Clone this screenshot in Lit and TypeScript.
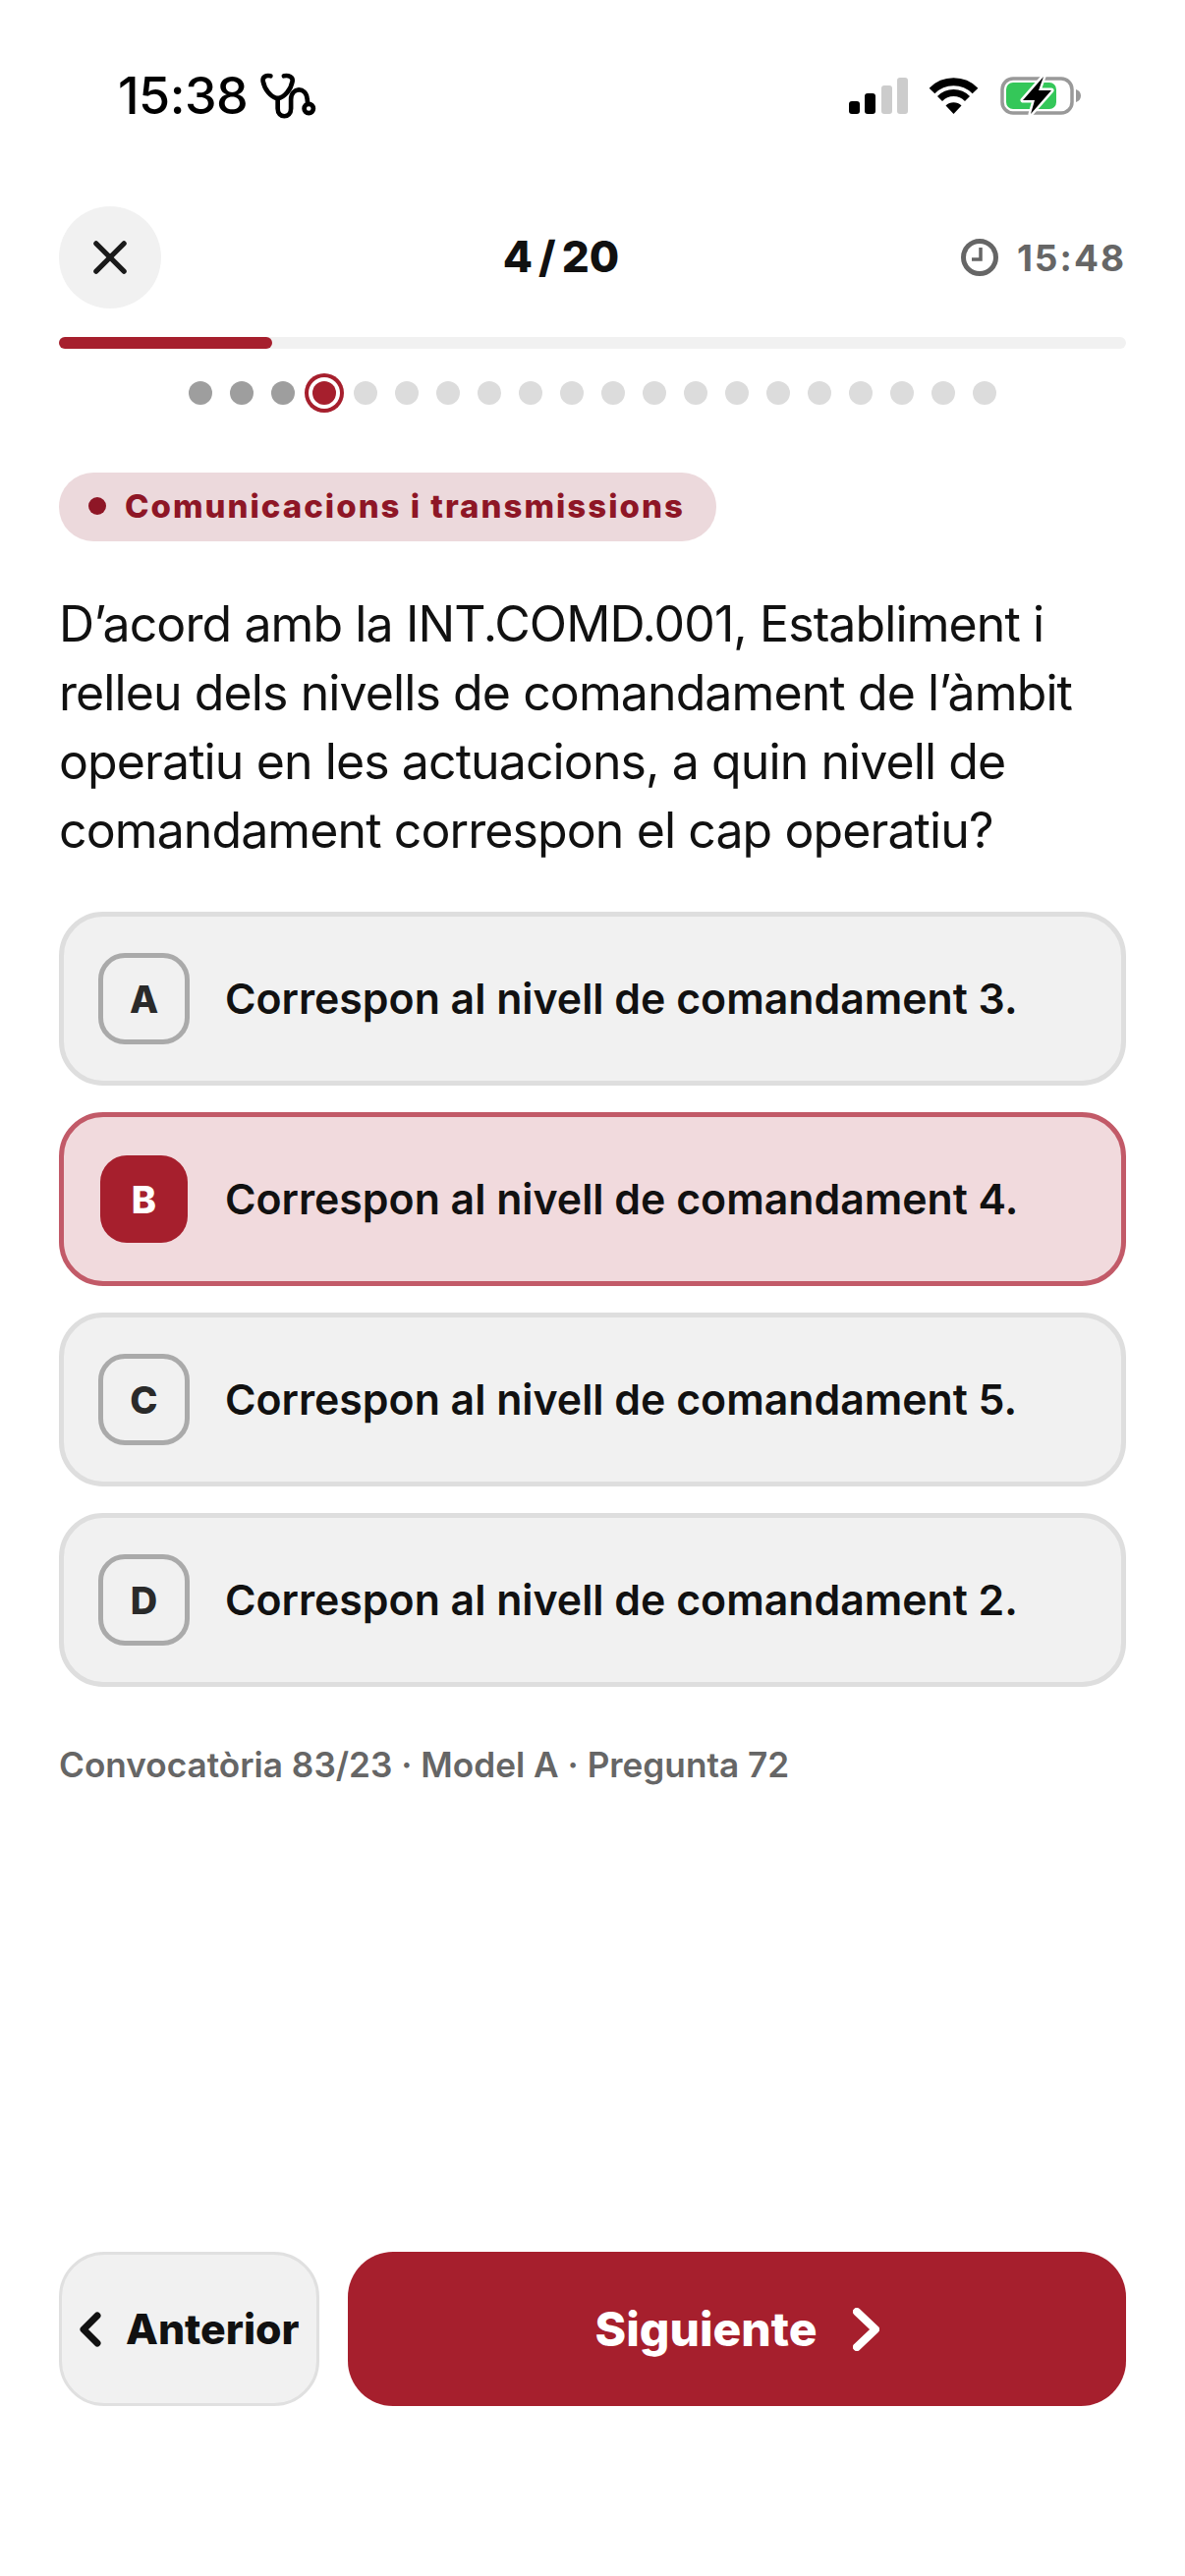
import { LitElement, css, html, svg } from "lit";
import { customElement } from "lit/decorators.js";

const OPTIONS = [
  { key: "A", text: "Correspon al nivell de comandament 3." },
  { key: "B", text: "Correspon al nivell de comandament 4.", selected: true },
  { key: "C", text: "Correspon al nivell de comandament 5." },
  { key: "D", text: "Correspon al nivell de comandament 2." },
];

const TOTAL = 20;
const CURRENT = 4;

const stethoscope = svg`<svg class="steth" viewBox="0 0 56 46" fill="none" stroke="#000" stroke-width="4.500" stroke-linecap="round" stroke-linejoin="round">
  <path d="M11 4 C6 3 3 5 3.500 9 C5 17 11 25 18 26 C25 25 31 17 32.500 9 C33 5 29 3 24 4" />
  <path d="M18 26 V36 C18 46 31 46 31 36 V27 C31 15 46 14 47 27 L47.500 31" />
  <circle cx="48.500" cy="36" r="4.500" />
</svg>`;

const signal = svg`<svg class="signal" viewBox="0 0 60 37">
  <rect x="0" y="24" width="11" height="13" rx="3" fill="#000" />
  <rect x="16" y="16" width="11" height="21" rx="3" fill="#000" />
  <rect x="33" y="8" width="11" height="29" rx="3" fill="#ccc" />
  <rect x="49" y="0" width="11" height="37" rx="3" fill="#ccc" />
</svg>`;

const wifi = svg`<svg class="wifi" viewBox="0 0 51 37" fill="none">
  <path d="M3.500 13.500 A31 31 0 0 1 47.500 13.500" stroke="#000" stroke-width="8" />
  <path d="M11.500 21.500 A19.500 19.500 0 0 1 39.500 21.500" stroke="#000" stroke-width="7" />
  <path d="M25.500 37 L17.500 28.500 A11.500 11.500 0 0 1 33.500 28.500 Z" fill="#000" />
</svg>`;

const battery = svg`<svg class="battery" viewBox="0 0 82 40" fill="none">
  <rect x="2" y="3" width="71" height="35" rx="11" stroke="#999" stroke-width="3.500" />
  <path d="M77 14 C80 15 82 17 82 20.500 C82 24 80 26 77 27 Z" fill="#999" />
  <rect x="6" y="7" width="51" height="27" rx="7" fill="#34c759" />
  <path d="M44 1 L23 25 H35 L31 39 L52 15 H39 Z" fill="#000" stroke="#fff" stroke-width="5" stroke-linejoin="round" paint-order="stroke" />
</svg>`;

const close = svg`<svg class="close" viewBox="0 0 36 36" fill="none" stroke="#1a1a1a" stroke-width="5.500" stroke-linecap="round">
  <path d="M3 3 L33 33 M33 3 L3 33" />
</svg>`;

const clock = svg`<svg class="clock" viewBox="0 0 38 38" fill="none" stroke="#666" stroke-width="5">
  <circle cx="19" cy="19" r="16.500" />
  <path d="M20 9 V21 H11" stroke-width="3.500" />
</svg>`;

const chevronLeft = svg`<svg class="chev" viewBox="0 0 22 36" fill="none" stroke="#111" stroke-width="7" stroke-linecap="round" stroke-linejoin="round">
  <path d="M18 4 L4 18 L18 32" />
</svg>`;

const chevronRight = svg`<svg class="chev-r" viewBox="0 0 27 44" fill="none" stroke="#fff" stroke-width="8" stroke-linecap="round" stroke-linejoin="round">
  <path d="M4 4 L23 22 L4 40" />
</svg>`;

@customElement("app-root")
export class AppRoot extends LitElement {
  static styles = css`
    :host {
      display: block;
      width: 1206px;
      height: 2622px;
      background: #fff;
      font-family: Inter, "Noto Sans", sans-serif;
      color: #111;
    }

    .page {
      display: flex;
      flex-direction: column;
      height: 2622px;
      box-sizing: border-box;
      padding: 0 60px 173px;
    }

    .status {
      display: flex;
      align-items: center;
      justify-content: space-between;
      height: 210px;
      box-sizing: border-box;
      padding: 0 46px 16px 60px;
    }

    .status-left,
    .status-right {
      display: flex;
      align-items: center;
    }

    .time {
      font-size: 52px;
      font-weight: 500;
      color: #000;
      letter-spacing: -0.500px;
    }

    .steth {
      width: 58px;
      height: 48px;
      margin-left: 12px;
    }

    .signal {
      width: 60px;
      height: 37px;
    }

    .wifi {
      width: 51px;
      height: 37px;
      margin-left: 21px;
    }

    .battery {
      width: 82px;
      height: 40px;
      margin-left: 22px;
    }

    .header {
      display: flex;
      justify-content: space-between;
      align-items: center;
      height: 104px;
    }

    .close-btn {
      display: flex;
      align-items: center;
      justify-content: center;
      width: 104px;
      height: 104px;
      border-radius: 50%;
      background: #f1f1f1;
    }

    .close {
      width: 34px;
      height: 34px;
    }

    .counter {
      padding-bottom: 2px;
      font-size: 44px;
      font-weight: 800;
      word-spacing: -3.500px;
    }

    .timer {
      display: flex;
      align-items: center;
      justify-content: flex-end;
      gap: 19px;
      font-size: 37px;
      font-weight: 700;
      letter-spacing: 2px;
      color: #666;
    }

    .clock {
      width: 38px;
      height: 38px;
    }

    .track {
      height: 12px;
      margin-top: 29px;
      border-radius: 6px;
      background: #f1f1f1;
    }

    .fill {
      height: 12px;
      border-radius: 6px;
      background: #a61f2d;
    }

    .dots {
      display: flex;
      justify-content: center;
      gap: 18px;
      margin-top: 33px;
    }

    .dot {
      width: 24px;
      height: 24px;
      border-radius: 50%;
      background: #dcdcdc;
    }

    .dot.done {
      background: #9e9e9e;
    }

    .dot.current {
      background: #a61f2d;
      box-shadow: 0 0 0 4px #fff, 0 0 0 8px #a61f2d;
    }

    .chip {
      display: flex;
      align-items: center;
      align-self: flex-start;
      gap: 19px;
      height: 70px;
      box-sizing: border-box;
      margin-top: 69px;
      padding: 0 32px 2px 30px;
      border-radius: 35px;
      background: #ecd9dc;
      color: #8e1626;
      font-size: 33px;
      font-weight: 800;
      letter-spacing: 2px;
    }

    .chip-dot {
      width: 18px;
      height: 18px;
      border-radius: 50%;
      background: #8e1626;
    }

    .question {
      margin: 49px 0 0;
      font-size: 50px;
      font-weight: 400;
      line-height: 70px;
      letter-spacing: -0.900px;
      color: #111;
    }

    .options {
      display: flex;
      flex-direction: column;
      gap: 27px;
      margin-top: 48px;
    }

    .option {
      display: flex;
      align-items: center;
      gap: 36px;
      height: 177px;
      box-sizing: border-box;
      padding: 0 35px;
      border: 5px solid #dedede;
      border-radius: 45px;
      background: #f1f1f1;
      font-size: 42.800px;
      font-weight: 600;
      color: #111;
    }

    .option.selected {
      border-color: #c25a68;
      background: #f1dadd;
    }

    .badge {
      display: flex;
      align-items: center;
      justify-content: center;
      flex: none;
      width: 93px;
      height: 93px;
      box-sizing: border-box;
      border: 5px solid #aaa;
      border-radius: 27px;
      font-size: 38px;
      font-weight: 800;
      color: #2a2a2a;
    }

    .selected .badge {
      width: 89px;
      height: 89px;
      margin: 0 2px;
      border: none;
      background: #a61f2d;
      color: #fff;
    }

    .source {
      margin-top: 58px;
      font-size: 35.200px;
      font-weight: 600;
      color: #666;
    }

    .nav {
      display: flex;
      gap: 29px;
      margin-top: auto;
      height: 157px;
    }

    .prev {
      display: flex;
      align-items: center;
      gap: 25px;
      width: 265px;
      box-sizing: border-box;
      padding-left: 18px;
      border: 3px solid #e0e0e0;
      border-radius: 46px;
      background: #f1f1f1;
      font-size: 42.800px;
      font-weight: 800;
      color: #111;
    }

    .chev {
      flex: none;
      width: 22px;
      height: 36px;
    }

    .next {
      display: flex;
      flex: 1;
      align-items: center;
      justify-content: center;
      gap: 36px;
      border-radius: 46px;
      background: #a61f2d;
      font-size: 48px;
      font-weight: 800;
      color: #fff;
    }

    .chev-r {
      width: 27px;
      height: 44px;
    }
  `;

  render() {
    const dots = Array.from({ length: TOTAL }, (_, i) => i + 1);
    return html`
      <div class="page">
        <div class="status">
          <div class="status-left">
            <span class="time">15:38</span>${stethoscope}
          </div>
          <div class="status-right">${signal}${wifi}${battery}</div>
        </div>

        <div class="header">
          <div class="close-btn">${close}</div>
          <div class="counter">${CURRENT} / ${TOTAL}</div>
          <div class="timer">${clock}<span>15:48</span></div>
        </div>

        <div class="track">
          <div class="fill" style="width: ${(CURRENT / TOTAL) * 100}%"></div>
        </div>
        <div class="dots">
          ${dots.map(
            (n) =>
              html`<div
                class="dot ${n < CURRENT ? "done" : ""} ${n === CURRENT
                  ? "current"
                  : ""}"
              ></div>`
          )}
        </div>

        <div class="chip">
          <span class="chip-dot"></span>Comunicacions i transmissions
        </div>

        <p class="question">
          D’acord amb la INT.COMD.001, Establiment i<br />relleu dels nivells de
          comandament de l’àmbit<br />operatiu en les actuacions, a quin nivell
          de<br />comandament correspon el cap operatiu?
        </p>

        <div class="options">
          ${OPTIONS.map(
            (o) => html`<div class="option ${o.selected ? "selected" : ""}">
              <div class="badge">${o.key}</div>
              <span>${o.text}</span>
            </div>`
          )}
        </div>

        <div class="source">Convocatòria 83/23 · Model A · Pregunta 72</div>

        <div class="nav">
          <div class="prev">${chevronLeft}<span>Anterior</span></div>
          <div class="next"><span>Siguiente</span>${chevronRight}</div>
        </div>
      </div>
    `;
  }
}
